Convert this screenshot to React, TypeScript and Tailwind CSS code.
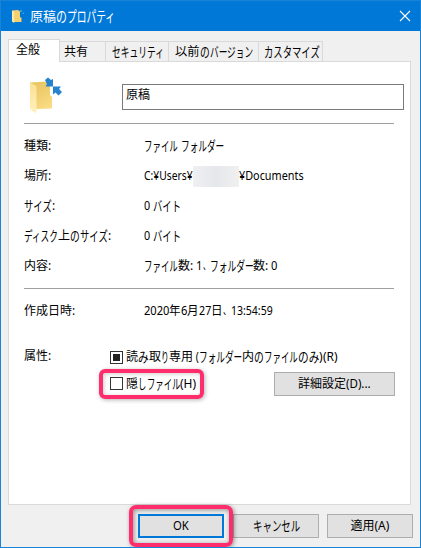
import { useLayoutEffect, useRef, useState, type ReactNode } from "react";

type Part = [string, number];

const KANA = /^[\u3040-\u30ff]+$/;

/** One run of text, condensed or widened horizontally to the given advance. */
function Run({ text, width }: { text: string; width: number }) {
  const ref = useRef<HTMLSpanElement>(null);
  const [scale, setScale] = useState(1);
  useLayoutEffect(() => {
    const fit = () => {
      const natural = ref.current?.offsetWidth ?? 0;
      if (natural > 0) setScale(width / natural);
    };
    fit();
    document.fonts.ready.then(fit);
  }, [text, width]);
  return (
    <span className={KANA.test(text) ? "inline-flex shrink-0 text-[1.14em]/4" : "inline-flex shrink-0"} style={{ width }}>
      <span ref={ref} className="inline-block shrink-0 origin-left whitespace-pre" style={{ transform: `scaleX(${scale})` }}>
        {text}
      </span>
    </span>
  );
}

function Label({ parts }: { parts: Part[] }) {
  return (
    <span className="flex h-4 items-center whitespace-pre leading-4">
      {parts.map(([text, width], i) => (
        <Run key={i} text={text} width={width} />
      ))}
    </span>
  );
}

function Row({ name, children }: { name: Part[]; children: ReactNode }) {
  return (
    <div className="flex h-[30px] items-center">
      <div className="w-[120px] shrink-0">
        <Label parts={name} />
      </div>
      <div className="flex items-center">{children}</div>
    </div>
  );
}

function SmallFolderIcon() {
  return (
    <svg className="mr-1 h-4 w-4" viewBox="0 0 16 16" fill="none">
      <path d="M2 2.5 8 2l2 1.5V9l1.5.8V14H4z" fill="#f3d06f" />
      <path d="M2 2.5 4.2 4v11L2 13.5z" fill="#ffe9a6" />
      <path d="M10 2h2v2h-2zM12.5 4.5h1.5V6h-1.5z" fill="#3fa0dc" />
    </svg>
  );
}

function FolderIcon() {
  return (
    <svg className="ml-1 mt-3.5 h-[38px] w-9" viewBox="0 0 36 38" fill="none">
      <defs>
        <linearGradient id="folderBack" x1="8" y1="6" x2="23" y2="32" gradientUnits="userSpaceOnUse">
          <stop stopColor="#e9c563" />
          <stop offset=".45" stopColor="#f0cf72" />
          <stop offset="1" stopColor="#fbdd85" />
        </linearGradient>
        <linearGradient id="folderFlap" x1="2" y1="6" x2="8" y2="36" gradientUnits="userSpaceOnUse">
          <stop stopColor="#fbe093" />
          <stop offset="1" stopColor="#fff0bd" />
        </linearGradient>
      </defs>
      <path d="M2 6.5 20 5.5 22 8v11l2 2v11.5L8 33z" fill="url(#folderBack)" />
      <path d="M2 6.5 8.5 10v26l-1.5 1L2 33z" fill="url(#folderFlap)" />
      <path d="m17 4 3-2.5 3 2.5 2-1v7.5h-7.5l1.5-2.5z" fill="#2583cf" />
      <path d="M25 10.500h8l-2 2.500 3 3-3.500 3.500-3-3-2.500 2z" fill="#2583cf" />
    </svg>
  );
}

function Tab({ className, parts }: { className: string; parts: Part[] }) {
  return (
    <div className={`flex h-5 items-center border-r border-t border-[#d9d9d9] bg-[#f0f0f0] ${className}`}>
      <Label parts={parts} />
    </div>
  );
}

function Checkbox({ filled }: { filled?: boolean }) {
  return (
    <span className="mr-[3px] flex size-[13px] shrink-0 items-center justify-center border border-[#333] bg-white">
      {filled && <span className="size-[7px] bg-[#222]" />}
    </span>
  );
}

export default function App() {
  return (
    <div className="flex h-[548px] w-[421px] flex-col overflow-hidden border-x border-b border-[#1883d7] bg-[#f0f0f0] font-['Noto_Sans','Noto_Sans_CJK_JP',sans-serif] text-[12px] text-black">
      <header className="flex h-[31px] shrink-0 items-center border-t border-[#1883d7] bg-[#0078d7] pb-px pl-[9px] pr-[9px] text-white">
        <SmallFolderIcon />
        <span className="text-[13px]">
          <Label parts={[["原稿", 26], ["の", 11], ["プロパティ", 48]]} />
        </span>
        <svg className="ml-auto size-3" viewBox="0 0 12 12" fill="none">
          <path d="m1 1 10 10M11 1 1 11" stroke="white" strokeWidth="1.1" />
        </svg>
      </header>

      <main className="flex flex-1 flex-col pl-[7px]">
        <nav className="relative flex h-[30px] shrink-0 items-end">
          <div className="relative z-10 -mb-px flex h-[23px] w-[52px] items-center border-x border-t border-[#d9d9d9] bg-white pb-[3px] pl-[7px]">
            <Label parts={[["全般", 24]]} />
          </div>
          <Tab className="w-[46px] pl-1" parts={[["共有", 24]]} />
          <Tab className="w-[63px] pl-[6px]" parts={[["セキュリティ", 52]]} />
          <Tab className="w-[90px] pl-[6px]" parts={[["以前", 24.5], ["の", 10], ["バージョン", 43]]} />
          <Tab className="w-[64px] pl-[5px]" parts={[["カスタマイズ", 56]]} />
        </nav>

        <section className="flex h-[444px] w-[403px] shrink-0 flex-col border border-[#d9d9d9] bg-white pl-[15px]">
          <div className="flex h-[61px] shrink-0 items-start">
            <FolderIcon />
            <div className="ml-[58px] mt-[22px] flex h-[26px] w-[282px] items-start border border-[#7a7a7a] pl-[3px] pt-[2px]">
              <Label parts={[["原稿", 24]]} />
            </div>
          </div>
          <div className="h-px w-[370px] shrink-0 bg-[#a0a0a0]" />
          <div className="mt-[7px] shrink-0">
            <Row name={[["種類", 24], [":", 3]]}>
              <Label parts={[["ファイル", 34], [" ", 3], ["フォルダー", 43]]} />
            </Row>
            <Row name={[["場所", 24], [":", 3]]}>
              <Label parts={[["C:¥Users¥", 49]]} />
              <span className="h-[21px] w-[46px] bg-linear-to-r from-[#f0f0f2] via-[#e5e7ec] to-[#f0f0f0]" />
              <Label parts={[["¥Documents", 65]]} />
            </Row>
            <Row name={[["サイズ", 28], [":", 3]]}>
              <Label parts={[["0 ", 9], ["バイト", 28]]} />
            </Row>
            <Row name={[["ディスク", 34], ["上", 12], ["の", 10], ["サイズ", 28], [":", 3]]}>
              <Label parts={[["0 ", 9], ["バイト", 28]]} />
            </Row>
            <Row name={[["内容", 24], [":", 3]]}>
              <Label parts={[["ファイル", 34], ["数", 12], [": ", 6], ["1", 6.5], ["、", 7], ["フォルダー", 43.5], ["数", 12], [": ", 6], ["0", 6.5]]} />
            </Row>
          </div>
          <div className="mt-[7px] h-px w-[370px] shrink-0 bg-[#a0a0a0]" />
          <div className="mt-[7px]">
            <Row name={[["作成日時", 48], [":", 3]]}>
              <Label parts={[["2020", 25], ["年", 11.5], ["6", 6.5], ["月", 11.5], ["27", 12.5], ["日", 11.5], ["、", 8], ["13:54:59", 42]]} />
            </Row>
          </div>
          <div className="mt-[17px] flex">
            <div className="w-[86px] pt-[5px]">
              <Label parts={[["属性", 24], [":", 3]]} />
            </div>
            <div>
              <div className="flex h-[28px] items-center">
                <Checkbox filled />
                <Label parts={[["読", 12], ["み", 11], ["取", 12], ["り", 8], ["専用", 24], [" (", 6], ["フォルダー", 43], ["内", 12], ["の", 10], ["ファイル", 34], ["のみ", 21], [")", 4], ["(R)", 15]]} />
              </div>
              <div className="flex h-[26px] items-center">
                <div className="relative -ml-[11px] -mt-px flex h-[30px] w-[105px] items-center rounded-[6px] border-4 border-[#ff2d6b] pl-[7px] shadow-[1px_1px_4px_rgba(0,0,0,.3),inset_1px_1px_4px_rgba(0,0,0,.2)]">
                  <Checkbox />
                  <Label parts={[["隠", 12], ["し", 8.5], ["ファイル", 33.5], ["(H)", 16]]} />
                </div>
                <button className="ml-[70px] flex h-6 w-[121px] items-center justify-center border border-[#adadad] bg-[#e1e1e1]">
                  <Label parts={[["詳細設定", 48], ["(D)...", 25]]} />
                </button>
              </div>
            </div>
          </div>
        </section>

        <footer className="flex h-[42px] items-start pl-[121px]">
          <div className="relative z-10 h-[42px] w-[104px] shrink-0 rounded-[7px] border-4 border-[#ff2d6b] pl-[5px] pt-[5px] shadow-[1px_1px_4px_rgba(0,0,0,.4),inset_1px_1px_5px_rgba(0,0,0,.4)]">
            <button className="flex h-6 w-[86px] items-center justify-center border-2 border-[#0078d7] bg-[#e1e1e1]">
              <Label parts={[["OK", 16]]} />
            </button>
          </div>
          <button className="mt-[9px] flex h-6 w-[86px] shrink-0 items-center justify-center border border-[#adadad] bg-[#e1e1e1]">
            <Label parts={[["キャンセル", 47]]} />
          </button>
          <button className="ml-2 mt-[9px] flex h-6 w-[86px] shrink-0 items-center justify-center border border-[#adadad] bg-[#e1e1e1]">
            <Label parts={[["適用", 24], ["(A)", 15]]} />
          </button>
        </footer>
      </main>
    </div>
  );
}
